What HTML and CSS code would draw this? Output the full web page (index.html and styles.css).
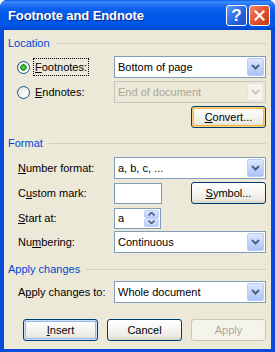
FILE: index.html
```html
<!DOCTYPE html>
<html lang="en">

<head>
    <meta charset="UTF-8">
    <meta name="viewport" content="width=device-width, initial-scale=1.0">
    <title>Footnote and Endnote</title>
    <link rel="stylesheet" href="styles.css">
</head>

<body>

    <div class="window">
        <div class="titlebar">
            <span class="title">Footnote and Endnote</span>
            <div class="caption-btns">
                <span class="cap-btn help">?</span>
                <span class="cap-btn close">
                    <svg width="11" height="11" viewBox="0 0 11 11">
                        <path d="M1.5 1.5 L9.5 9.5 M9.5 1.5 L1.5 9.5" stroke="#fff" stroke-width="2.2" stroke-linecap="square" />
                    </svg>
                </span>
            </div>
        </div>

        <div class="client">
            <div class="group-head head-location">Location</div>

            <div class="row radio-row row-foot">
                <span class="lbl"><span class="radio checked"></span><span class="focus"><u>F</u>ootnotes:</span></span>
                <div class="combo">
                    <span class="combo-text">Bottom of page</span>
                    <span class="drop"><svg width="9" height="6" viewBox="0 0 9 6"><path d="M1 1 L4.5 4.5 L8 1" fill="none" stroke="#4d6185" stroke-width="2" /></svg></span>
                </div>
            </div>

            <div class="row radio-row row-tight">
                <span class="lbl"><span class="radio"></span><span class="nofocus"><u>E</u>ndnotes:</span></span>
                <div class="combo disabled">
                    <span class="combo-text">End of document</span>
                    <span class="drop"><svg width="9" height="6" viewBox="0 0 9 6"><path d="M1 1 L4.5 4.5 L8 1" fill="none" stroke="#c9c7ba" stroke-width="2" /></svg></span>
                </div>
            </div>

            <div class="row row-tight row-right">
                <button class="btn hot"><u>C</u>onvert...</button>
            </div>

            <div class="group-head head-format">Format</div>

            <div class="row row-number">
                <span class="lbl"><u>N</u>umber format:</span>
                <div class="combo">
                    <span class="combo-text">a, b, c, ...</span>
                    <span class="drop"><svg width="9" height="6" viewBox="0 0 9 6"><path d="M1 1 L4.5 4.5 L8 1" fill="none" stroke="#4d6185" stroke-width="2" /></svg></span>
                </div>
            </div>

            <div class="row row-tight">
                <span class="lbl">C<u>u</u>stom mark:</span>
                <span class="textbox"></span>
                <button class="btn push-right"><u>S</u>ymbol...</button>
            </div>

            <div class="row row-tight">
                <span class="lbl"><u>S</u>tart at:</span>
                <div class="spin">
                    <span class="spin-text">a</span>
                    <span class="spin-btns">
                        <span class="spin-half"><svg width="7" height="4" viewBox="0 0 7 4"><path d="M0.5 3.5 L3.5 0.5 L6.5 3.5" fill="none" stroke="#4d6185" stroke-width="1.6" /></svg></span>
                        <span class="spin-half"><svg width="7" height="4" viewBox="0 0 7 4"><path d="M0.5 0.5 L3.5 3.5 L6.5 0.5" fill="none" stroke="#4d6185" stroke-width="1.6" /></svg></span>
                    </span>
                </div>
            </div>

            <div class="row row-numbering">
                <span class="lbl">Nu<u>m</u>bering:</span>
                <div class="combo">
                    <span class="combo-text">Continuous</span>
                    <span class="drop"><svg width="9" height="6" viewBox="0 0 9 6"><path d="M1 1 L4.5 4.5 L8 1" fill="none" stroke="#4d6185" stroke-width="2" /></svg></span>
                </div>
            </div>

            <div class="group-head head-apply">Apply changes</div>

            <div class="row row-apply">
                <span class="lbl">A<u>p</u>ply changes to:</span>
                <div class="combo">
                    <span class="combo-text">Whole document</span>
                    <span class="drop"><svg width="9" height="6" viewBox="0 0 9 6"><path d="M1 1 L4.5 4.5 L8 1" fill="none" stroke="#4d6185" stroke-width="2" /></svg></span>
                </div>
            </div>

            <div class="button-row">
                <button class="btn default"><u>I</u>nsert</button>
                <button class="btn">Cancel</button>
                <button class="btn off">Apply</button>
            </div>
        </div>
    </div>

</body>

</html>
```

FILE: styles.css
```css
body {
    margin: 0;
    background: #ffffff;
    font-family: "Liberation Sans", Arial, sans-serif;
    font-size: 11px;
    color: #000;
}

.window {
    width: 275px;
    height: 352px;
    display: flex;
    flex-direction: column;
    background: #0a4bdb;
    border-radius: 7px 7px 0 0;
    overflow: hidden;
}

/* title bar */
.titlebar {
    height: 30px;
    flex: none;
    display: flex;
    align-items: flex-start;
    padding: 0 5px 0 8px;
    background: linear-gradient(#0a5ae8 0, #3d8ffb 2px, #2a78f6 4px, #0c60ee 9px, #0056e6 18px, #0058ea 25px, #0046cc 30px);
}

.title {
    flex: 1;
    margin-top: 8px;
    color: #fff;
    font-weight: bold;
    font-size: 13px;
    letter-spacing: -0.1px;
    text-shadow: 1px 1px #0b2a8c;
}

.caption-btns {
    display: flex;
    gap: 2px;
    margin-top: 5px;
}

.cap-btn {
    width: 21px;
    height: 21px;
    box-sizing: border-box;
    border: 1px solid #fff;
    border-radius: 3px;
    display: flex;
    align-items: center;
    justify-content: center;
}

.help {
    background: linear-gradient(135deg, #5b9bff, #2463de 60%, #1d52c9);
    color: #fff;
    font-weight: bold;
    font-size: 17px;
    line-height: 1;
}

.close {
    background: linear-gradient(135deg, #f1896a, #e2522d 50%, #c53a14);
}

/* client area */
.client {
    flex: 1;
    margin: 0 4px 3px 4px;
    padding: 6px 5px 0 4px;
    background: #ece9d8;
}

.group-head {
    display: flex;
    align-items: center;
    height: 14px;
    line-height: 14px;
    color: #0046d5;
}

.group-head::after {
    content: "";
    flex: 1;
    height: 1px;
    margin-left: 6px;
    background: #d0d0bf;
}

.head-format {
    margin-top: 8px;
}

.head-apply {
    margin-top: 9px;
}

.row {
    display: flex;
    align-items: center;
    height: 22px;
    padding-left: 10px;
}

.radio-row {
    padding-left: 9px;
}

.row-foot {
    margin-top: 6px;
}

.row-tight {
    margin-top: 3px;
}

.row-right {
    justify-content: flex-end;
}

.row-number {
    margin-top: 7px;
}

.row-numbering {
    margin-top: 2px;
}

.row-apply {
    margin-top: 5px;
}

.lbl {
    width: 96px;
    flex: none;
    display: flex;
    align-items: center;
}

.radio-row .lbl {
    width: 97px;
}

.radio {
    width: 13px;
    height: 13px;
    box-sizing: border-box;
    border: 1px solid #1c5180;
    border-radius: 50%;
    background: linear-gradient(135deg, #dcdcd6, #fff 70%);
    margin-right: 3px;
    flex: none;
}

.radio.checked {
    background: radial-gradient(circle, #6fe06f 0, #2ea82e 2px, #1f8f1f 3px, transparent 3.5px), linear-gradient(135deg, #dcdcd6, #fff 70%);
}

.focus,
.nofocus {
    border: 1px solid transparent;
    padding: 0 1px;
    line-height: 16px;
}

.focus {
    border: 1px dotted #000;
}

/* combo boxes */
.combo {
    flex: 1;
    height: 22px;
    box-sizing: border-box;
    border: 1px solid #7f9db9;
    background: #fff;
    display: flex;
    align-items: center;
    padding: 1px;
}

.combo-text {
    flex: 1;
    padding-left: 2px;
}

.drop {
    width: 17px;
    height: 18px;
    box-sizing: border-box;
    border: 1px solid #b9cdf8;
    border-radius: 2px;
    background: linear-gradient(#dde8fe, #bed1fa 60%, #aac2f6);
    display: flex;
    align-items: center;
    justify-content: center;
}

.combo.disabled {
    border-color: #c9c7ba;
    background: #ece9d8;
    color: #aca899;
}

.combo.disabled .drop {
    border-color: #e6e4da;
    background: #f4f3ee;
}

.textbox {
    width: 48px;
    height: 21px;
    box-sizing: border-box;
    border: 1px solid #7f9db9;
    background: #fff;
}

.spin {
    width: 47px;
    height: 21px;
    box-sizing: border-box;
    border: 1px solid #7f9db9;
    background: #fff;
    display: flex;
    padding: 1px;
}

.spin-text {
    flex: 1;
    padding-left: 2px;
    line-height: 17px;
}

.spin-btns {
    width: 15px;
    display: flex;
    flex-direction: column;
}

.spin-half {
    flex: 1;
    box-sizing: border-box;
    border: 1px solid #b9cdf8;
    border-radius: 2px;
    background: linear-gradient(#dde8fe, #b9cdf8);
    display: flex;
    align-items: center;
    justify-content: center;
}

/* push buttons */
.btn {
    width: 75px;
    height: 22px;
    box-sizing: border-box;
    padding: 0;
    border: 1px solid #003c74;
    border-radius: 3px;
    background: linear-gradient(#ffffff 0, #f5f5f1 45%, #ecebe5 80%, #d8d3c7 100%);
    font-family: "Liberation Sans", Arial, sans-serif;
    font-size: 11px;
    color: #000;
}

.btn.hot {
    box-shadow: inset 0 0 0 1px #fbd07a, inset 0 0 0 2px #f6b63a;
}

.btn.default {
    box-shadow: inset 0 0 0 1px #cee0fb, inset 0 0 0 2px #9ab8ee;
}

.btn.off {
    border-color: #c9c7ba;
    background: #f5f4ea;
    color: #aca899;
}

.push-right {
    margin-left: auto;
}

.button-row {
    display: flex;
    justify-content: flex-end;
    gap: 9px;
    margin-top: 16px;
}
```
